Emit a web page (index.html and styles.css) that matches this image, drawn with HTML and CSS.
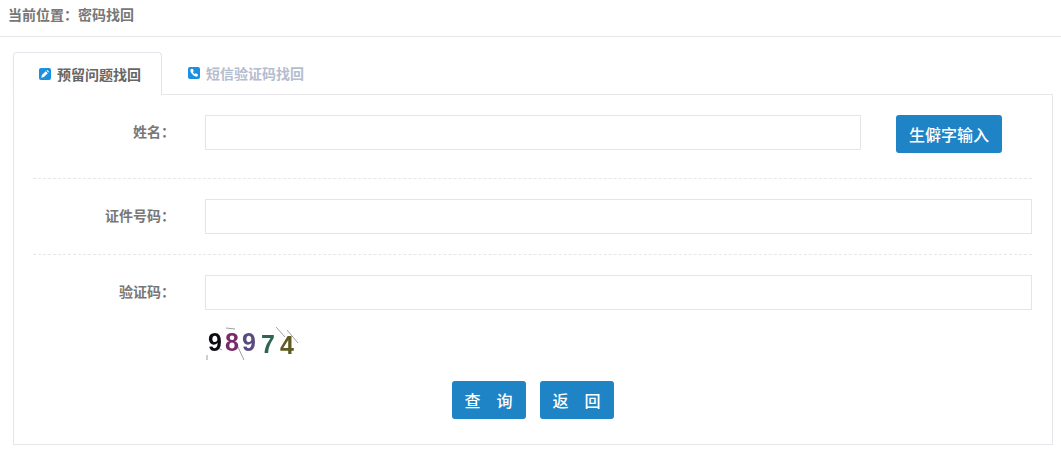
FILE: index.html
```html
<!DOCTYPE html>
<html lang="zh-CN">
<head>
    <meta charset="UTF-8">
    <title>密码找回</title>
    <link rel="stylesheet" href="styles.css">
</head>
<body>
    <div class="crumb">当前位置&#65306;密码找回</div>

    <div class="wrap">
        <ul class="tabs">
            <li class="tab active">
                <svg class="tab-icon" viewBox="0 0 12 12">
                    <rect width="12" height="12" rx="2" fill="#1b8fe0"/>
                    <path d="M2.300 9.700l.6-2.600 3.900-3.900 2 2-3.900 3.900z M7.400 2.600l.8-.7 1.900 1.900-.7.800z" fill="#fff"/>
                </svg>
                预留问题找回
            </li>
            <li class="tab">
                <svg class="tab-icon" viewBox="0 0 12 12">
                    <rect width="12" height="12" rx="2" fill="#1b8fe0"/>
                    <path d="M3 2l1.700-.3 1.100 2.400-.9.9c.3.900 1 1.600 1.900 2l1-.8 2.200 1.400-.4 1.700c-.4.400-1 .5-1.700.3C5 8.800 2.900 6.600 2.300 3.600c-.1-.7.200-1.300.7-1.600z" fill="#fff"/>
                </svg>
                短信验证码找回
            </li>
        </ul>

        <div class="panel">
            <div class="row row-line">
                <label class="row-label">姓名&#65306;</label>
                <input class="field field-short" type="text">
                <button class="btn btn-rare">生僻字输入</button>
            </div>
            <div class="row row-line">
                <label class="row-label">证件号码&#65306;</label>
                <input class="field" type="text">
            </div>
            <div class="row row-last">
                <label class="row-label">验证码&#65306;</label>
                <input class="field" type="text">
            </div>
            <div class="captcha">
                <svg class="captcha-lines" viewBox="0 0 95 33">
                    <path d="M21 1l9 1M32 18l7 15M71 0l9 10M82 3l11 13M2 28v5M13 21l4 2" stroke="#777" stroke-width="0.7" fill="none"/>
                </svg>
                <span class="d d1">9</span><span class="d d2">8</span><span class="d d3">9</span><span class="d d4">7</span><span class="d d5">4</span>
            </div>
            <div class="actions">
                <button class="btn btn-wide">查&emsp;询</button>
                <button class="btn btn-wide">返&emsp;回</button>
            </div>
        </div>
    </div>
</body>
</html>
```

FILE: styles.css
```css
* {
    box-sizing: border-box;
}

body {
    margin: 0;
    background: #fff;
    color: #666;
    font-family: "Noto Sans CJK SC", "Liberation Sans", sans-serif;
    font-size: 14px;
}

.crumb {
    height: 37px;
    padding: 5px 0 0 8px;
    border-bottom: 1px solid #e7e7eb;
    line-height: 18px;
    font-weight: 700;
    color: #777;
}

.wrap {
    padding: 15px 8px 0 13px;
}

/* tabs */
.tabs {
    display: flex;
    list-style: none;
    margin: 0;
    padding: 0;
    position: relative;
    z-index: 1;
}

.tab {
    width: 149px;
    height: 43px;
    display: flex;
    align-items: center;
    padding-left: 25px;
    padding-bottom: 1px;
    font-weight: 700;
    color: #b4bdcf;
    white-space: nowrap;
}

.tab.active {
    background: #fff;
    border: 1px solid #e3e5ea;
    border-bottom: none;
    border-radius: 4px 4px 0 0;
    color: #666;
}

.tab-icon {
    width: 12px;
    height: 12px;
    margin-right: 6px;
    flex: none;
}

.tab + .tab {
    padding-left: 26px;
}

/* form */
.panel {
    height: 351px;
    margin-top: -1px;
    padding: 20px 20px 0 19px;
    border: 1px solid #e7e7eb;
}

.row {
    display: flex;
    align-items: flex-start;
}

.row-line {
    border-bottom: 1px dashed #e5e8e8;
}

.row-line:first-child {
    height: 64px;
}

.row-line:nth-child(2) {
    height: 76px;
    padding-top: 20px;
}

.row-last {
    padding-top: 20px;
}

.row-label {
    width: 172px;
    flex: none;
    padding: 5px 30px 0 0;
    text-align: right;
    line-height: 22px;
    font-weight: 700;
    color: #777;
    white-space: nowrap;
}

.field {
    flex: 1;
    height: 35px;
    border: 1px solid #e5e5e5;
    background: #fff;
    outline: none;
}

.field-short {
    flex: none;
    width: 656px;
}

.btn {
    height: 38px;
    border: none;
    border-radius: 3px;
    background: #1e84c6;
    color: #fff;
    font-family: inherit;
    font-size: 16px;
    font-weight: 500;
}

.btn-rare {
    width: 106px;
    margin-left: 35px;
    padding: 0;
}

.btn-wide {
    width: 74px;
    padding: 0;
}

/* captcha */
.captcha {
    position: relative;
    width: 95px;
    height: 33px;
    margin: 17px 0 0 172px;
    display: flex;
    align-items: center;
    padding-left: 1px;
    font-family: "Liberation Sans", sans-serif;
    font-weight: 700;
    font-size: 25px;
    line-height: 1;
    overflow: hidden;
    filter: blur(0.3px);
}

.captcha-lines {
    position: absolute;
    top: 0;
    left: 0;
    width: 95px;
    height: 33px;
}

.d {
    width: 18px;
    text-align: center;
}

.d1 { color: #0b0b12; transform: translateY(-1px); }
.d2 { color: #7a2a68; transform: translate(-1px, -1px); }
.d3 { color: #5b4a80; transform: translate(-2px, -1px); }
.d4 { color: #2f6652; transform: translate(-1px, 1px); }
.d5 { color: #5f5a22; transform: translate(0, 2px); }

.actions {
    display: flex;
    justify-content: center;
    gap: 14px;
    margin-top: 21px;
}
```
